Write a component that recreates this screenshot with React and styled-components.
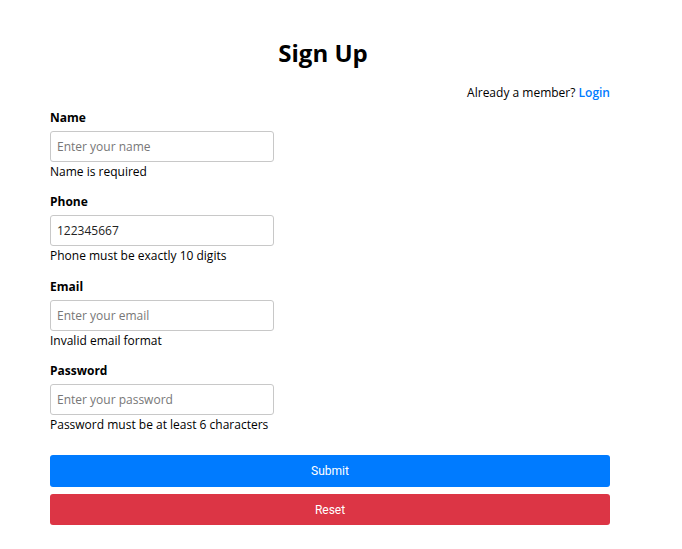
import React, { useState } from "react";
import styled, { createGlobalStyle } from "styled-components";

const GlobalStyle = createGlobalStyle`
  body {
    margin: 0;
    background: #fff;
    font-family: "Open Sans", "Noto Sans", sans-serif;
    color: #000;
  }
`;

const Page = styled.div`
  width: 560px;
  margin-left: 50px;
  padding-top: 38px;
`;

const Title = styled.h2`
  margin: 0;
  padding-right: 14px;
  text-align: center;
  font-size: 24px;
  line-height: 30px;
  font-weight: 700;
`;

const MemberLine = styled.div`
  margin-top: 16px;
  text-align: right;
  font-size: 12px;
  line-height: 18px;
`;

const LoginLink = styled.a`
  color: #007bff;
  font-weight: 600;
  text-decoration: none;
`;

const Form = styled.form`
  margin-top: 7px;
  display: flex;
  flex-direction: column;
`;

const Field = styled.div`
  display: flex;
  flex-direction: column;
  margin-bottom: 13.34px;
`;

const Label = styled.label`
  font-size: 12px;
  line-height: 18px;
  font-weight: 700;
  margin-bottom: 4px;
`;

const Input = styled.input`
  box-sizing: border-box;
  width: 224px;
  height: 31px;
  padding: 0 6px;
  border: 1px solid #c8c8c8;
  border-radius: 3px;
  font-family: inherit;
  font-size: 12px;
  color: #222;
  outline: none;

  &::placeholder {
    color: #777;
  }
`;

const ErrorText = styled.div`
  padding-top: 1px;
  margin-bottom: -1px;
  font-size: 12px;
  line-height: 18px;
`;

const Button = styled.button`
  box-sizing: border-box;
  width: 100%;
  height: ${(p) => p.$h}px;
  margin-top: ${(p) => p.$mt}px;
  border: none;
  border-radius: 3px;
  background: ${(p) => p.$bg};
  color: #fff;
  font-family: Roboto, "Liberation Sans", sans-serif;
  font-size: 12px;
  cursor: pointer;
`;

const fields = [
  { name: "name", label: "Name", placeholder: "Enter your name", error: "Name is required" },
  { name: "phone", label: "Phone", placeholder: "Enter your phone", error: "Phone must be exactly 10 digits" },
  { name: "email", label: "Email", placeholder: "Enter your email", error: "Invalid email format" },
  { name: "password", label: "Password", placeholder: "Enter your password", error: "Password must be at least 6 characters", type: "password" },
];

const App = () => {
  const [values, setValues] = useState({ name: "", phone: "122345667", email: "", password: "" });

  const handleChange = (e) => setValues({ ...values, [e.target.name]: e.target.value });

  return (
    <>
      <GlobalStyle />
      <Page>
        <Title>Sign Up</Title>
        <MemberLine>
          Already a member? <LoginLink href="#">Login</LoginLink>
        </MemberLine>
        <Form onSubmit={(e) => e.preventDefault()}>
          {fields.map((f) => (
            <Field key={f.name}>
              <Label htmlFor={f.name}>{f.label}</Label>
              <Input
                id={f.name}
                name={f.name}
                type={f.type || "text"}
                placeholder={f.placeholder}
                value={values[f.name]}
                onChange={handleChange}
              />
              <ErrorText>{f.error}</ErrorText>
            </Field>
          ))}
          <Button type="submit" $bg="#007bff" $h={32} $mt={9}>Submit</Button>
          <Button type="button" $bg="#dc3545" $h={31} $mt={7}>Reset</Button>
        </Form>
      </Page>
    </>
  );
};

export default App;
